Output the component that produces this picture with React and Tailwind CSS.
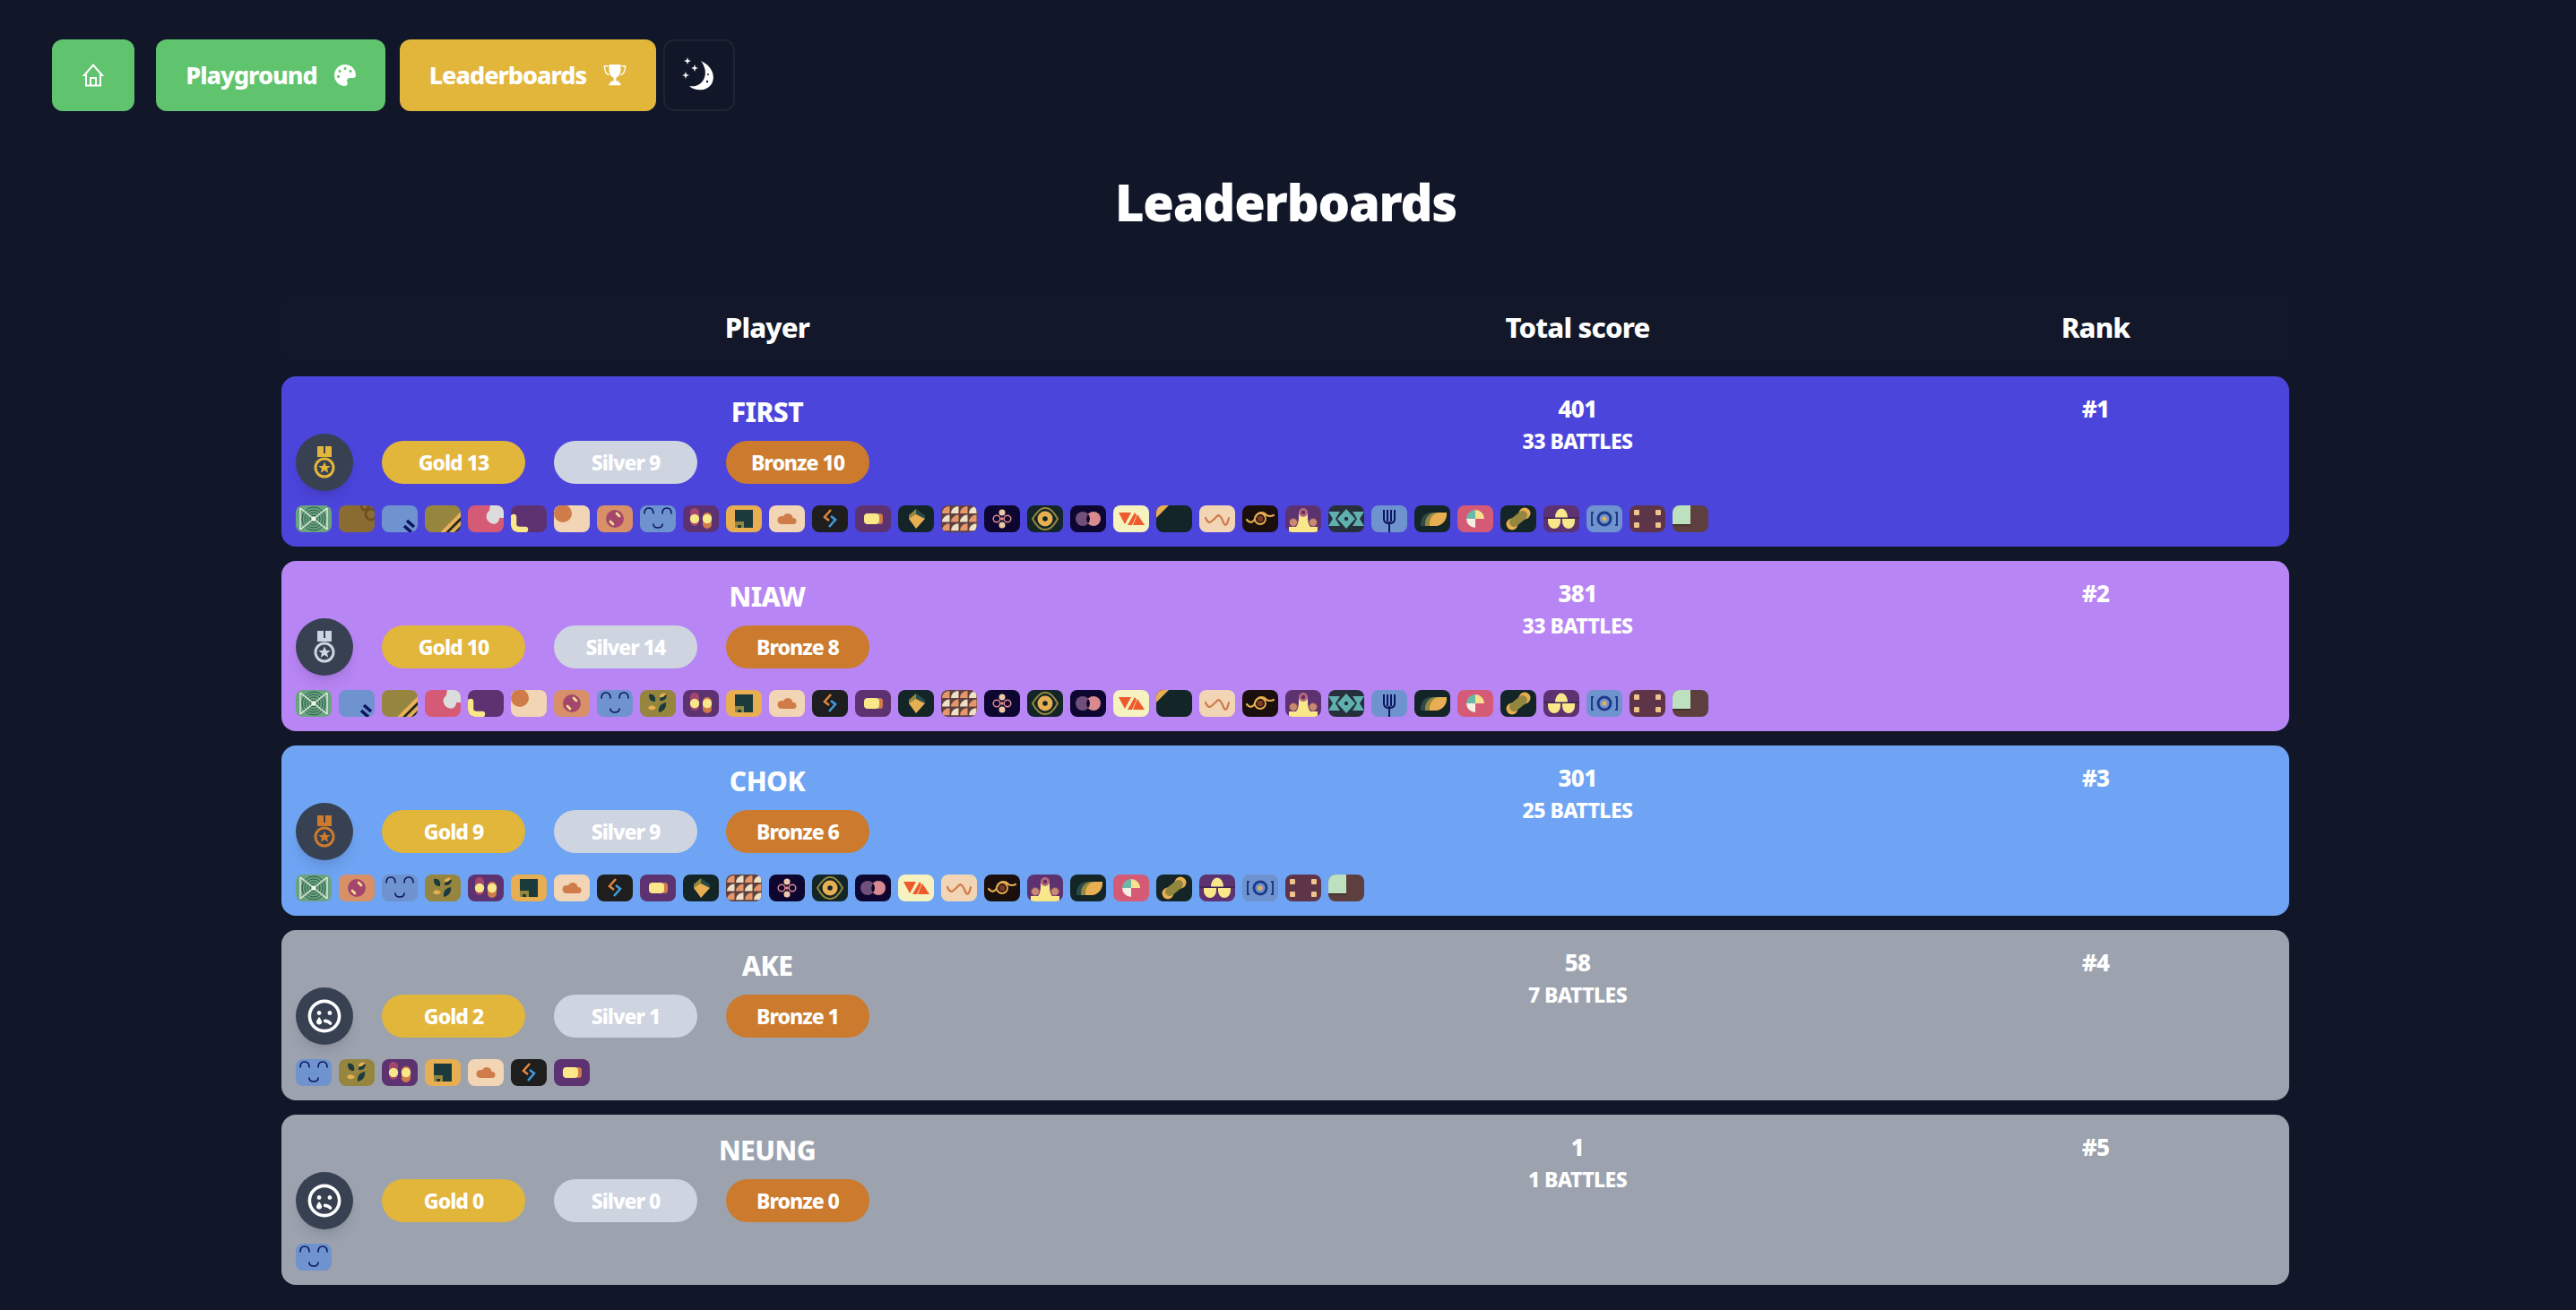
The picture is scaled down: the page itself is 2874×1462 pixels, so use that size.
import React from "react";
import { FaPalette, FaRegSadTear } from "react-icons/fa";

const C = { blue: "#6f93cf", purple: "#5d3270", cream: "#f2d5b5", orange: "#cf7b4a", dark: "#132527", yellow: "#f8e88a", gold: "#e8ae52", navy: "#0d0630", olive: "#96853f", pink: "#d55a75", brown: "#5e3f3f" };

const LEAF = "M17 23C16 13 23 8 28 8H36C37 16 31 23 24 23Z";

const icons = {
  web: [ "#6aa37f", <g key="a"><g fill="none" stroke="#2a5a4c" strokeWidth="1"><circle cx="20" cy="15" r="4" /><circle cx="20" cy="15" r="7" /><circle cx="20" cy="15" r="10" /><circle cx="20" cy="15" r="13" /></g><path d="M5 3L35 27M35 3L5 27M5 3V27M35 3V27" stroke="#e6efe0" strokeWidth="1.4" fill="none" /><circle cx="20" cy="15" r="2.5" fill="#f3f6e6" /></g> ],
  brown: [ "#8a6c33", <g key="a" fill="none" stroke="#6f5020" strokeWidth="3"><circle cx="29" cy="1" r="4" /><circle cx="36" cy="10" r="6" /></g> ],
  diag: [ C.blue, <path key="a" d="M28 17L36 24M25 23L33 30" stroke="#0d1560" strokeWidth="3.6" /> ],
  stripes: [ C.olive, <g key="a"><path d="M18 32L42 8" stroke="#eab05a" strokeWidth="4" /><path d="M23 32L42 13" stroke="#1a1a1a" strokeWidth="2" /><path d="M28 32L42 18" stroke="#eab05a" strokeWidth="3" /><path d="M33 32L42 23" stroke="#1a1a1a" strokeWidth="2.5" /></g> ],
  blob: [ C.pink, <path key="a" d="M25 0H40V14H35C35 20 30 22 26 20C21 18 19 12 22 8C25 6 24 3 25 0Z" fill="#dcdcdc" /> ],
  lshape: [ C.purple, <path key="a" d="M3 13V21Q3 27 10 27H16" stroke={C.yellow} strokeWidth="6.5" strokeLinecap="round" fill="none" /> ],
  dot: [ C.cream, <circle key="a" cx="10" cy="9" r="10" fill={C.orange} /> ],
  salmon: [ "#d89068", <g key="a"><circle cx="20" cy="15" r="10" fill="#a5476d" /><path d="M15 18L18 21M22 9L25 12" stroke="#f5e58b" strokeWidth="2.6" strokeLinecap="round" /></g> ],
  smile: [ C.blue, <path key="a" d="M5 9Q5 3 10 3T15 9M25 9Q25 3 30 3T35 9M15 21Q15 25 20 25T25 21" stroke="#0d1560" strokeWidth="1.6" fill="none" strokeLinecap="round" /> ],
  eyes: [ C.purple, <g key="a"><rect x="8" y="3" width="10" height="20" rx="5" fill="#a5476d" /><rect x="22" y="8" width="10" height="18" rx="5" fill={C.orange} /><circle cx="13" cy="15" r="5.2" fill={C.yellow} /><circle cx="27" cy="15" r="5.2" fill={C.yellow} /></g> ],
  square: [ C.gold, <g key="a"><rect x="10" y="5" width="20" height="20" fill="#1b3a3c" /><path d="M10 18H20V25H17V22H13V25H10Z" fill="#93873f" /></g> ],
  cloud: [ C.cream, <g key="a" fill={C.orange}><circle cx="14" cy="16.500" r="4.500" /><circle cx="21" cy="14.500" r="5.500" /><circle cx="27" cy="17.500" r="3.500" /><rect x="14" y="16" width="13" height="5" /></g> ],
  bolt: [ "#1e1e1e", <g key="a" fill="none" strokeWidth="2.6"><path d="M21 5L14 13L19 17" stroke="#e0853e" /><path d="M21 12L26 16L19 24" stroke="#3f9bdc" /></g> ],
  pill: [ C.purple, <g key="a"><rect x="24" y="9" width="7" height="12" rx="3.5" fill={C.orange} /><rect x="10" y="9" width="17" height="12" rx="4" fill={C.yellow} /></g> ],
  gem: [ C.dark, <g key="a"><path d="M20 4L30 11V15L20 15Z" fill="#2a4a4a" /><path d="M20 4L12 11V15H20Z" fill="#93873f" /><path d="M12 15L20 10L30 15L20 26Z" fill={C.gold} /></g> ],
  pattern: [ C.brown, <g key="a">{[0, 1, 2, 3].flatMap((i) => [0, 1, 2].map((j) => {
    const x = 1 + i * 10; const y = 1 + j * 9.6;
    const f = (i + j) % 2 === 0 ? "#e5976a" : "#efe0c5";
    return <path key={i + "" + j} d={`M${x + 8.500} ${y}V${y + 8}H${x}A8.500 8 0 0 1 ${x + 8.500} ${y}Z`} fill={f} />;
  }))}</g> ],
  flower: [ C.navy, <g key="a"><circle cx="20" cy="8" r="3.500" fill="#efc8a8" /><circle cx="20" cy="22" r="3.500" fill="#efc8a8" /><g fill="none" stroke="#e08a8e" strokeWidth="1.500"><circle cx="14" cy="15" r="3.800" /><circle cx="26" cy="15" r="3.800" /></g><circle cx="20" cy="15" r="1.800" fill="#e08a8e" /></g> ],
  eye: [ C.dark, <g key="a"><path d="M6 15Q14 2 20 3Q27 2 34 15Q27 28 20 27Q13 28 6 15Z" fill="none" stroke="#93873f" strokeWidth="2" /><circle cx="20" cy="15" r="8.500" fill={C.gold} /><circle cx="20" cy="15" r="2.800" fill="#132527" /></g> ],
  circles: [ C.navy, <g key="a"><circle cx="14" cy="15" r="8" fill="#70507a" /><circle cx="26" cy="15" r="8" fill="#d88a8e" /><path d="M20 9.700a8 8 0 0 1 0 10.600a8 8 0 0 1 0 -10.600Z" fill="#0d0630" /></g> ],
  triangles: [ "#f5f2c0", <g key="a" fill="#ee5a2c"><path d="M6 8H20L13 21Z" /><path d="M16 22L24 8L26 11L21 22Z" /><path d="M27 10L35 22H22Z" /></g> ],
  corner: [ C.dark, <path key="a" d="M0 0H14L0 14Z" fill={C.gold} /> ],
  wave: [ C.cream, <path key="a" d="M7 14Q10 21 13.500 18T20 12T26.500 18T33 14" stroke={C.orange} strokeWidth="2.200" fill="none" strokeLinecap="round" /> ],
  swirl: [ "#1a0f0d", <g key="a"><path d="M5 16Q9 21 13 17Q16 8 21 8Q25 8 27 11Q31 13 35 11" stroke={C.gold} strokeWidth="2.200" fill="none" strokeLinecap="round" /><circle cx="20" cy="15" r="6" fill="none" stroke={C.gold} strokeWidth="1.800" /><circle cx="20" cy="15" r="3.500" fill="#7a3a28" /></g> ],
  crown: [ C.purple, <g key="a"><path d="M4 30V24H12C15 20 15 16 15 10A5 5 0 0 1 25 10C25 16 25 20 28 24H36V30Z" fill={C.yellow} /><circle cx="20" cy="8" r="5" fill="#b06a80" /><circle cx="20" cy="8" r="2.200" fill="#6a2d5e" /><circle cx="9" cy="19" r="4.500" fill="#c98a72" stroke="#8c4a68" /><circle cx="31" cy="19" r="4.500" fill="#c98a72" stroke="#8c4a68" /></g> ],
  diamond: [ "#26303a", <g key="a"><path d="M0 7H13L8 15L13 23H0L5 15ZM40 7H27L32 15L27 23H40L35 15Z" fill="#5fb0ae" /><path d="M20 4L30 15L20 26L10 15Z" fill="#5fb0ae" /><circle cx="20" cy="15" r="2.200" fill="#26303a" /></g> ],
  fork: [ C.blue, <g key="a" stroke="#0d1560" fill="none"><path d="M14 5V15Q14 20 20 20Q26 20 26 15V5M18 5V18M22 5V18" strokeWidth="2" /><path d="M20 18V30" strokeWidth="2" /></g> ],
  leaf: [ C.dark, <g key="a"><path d={LEAF} transform="translate(-10 0)" fill="#2d4a48" /><path d={LEAF} transform="translate(-5 0)" fill="#93873f" /><path d={LEAF} fill={C.gold} /></g> ],
  pie: [ C.pink, <g key="a"><path d="M20 15V5A10 10 0 0 0 10 15Z" fill="#6cb8a8" /><path d="M20 15V5A10 10 0 0 1 30 15Z" fill="#f8e08f" /><path d="M20 15V25A10 10 0 0 1 10 15Z" fill="#f5f0e0" /></g> ],
  peanut: [ C.dark, <g key="a"><circle cx="27" cy="9" r="6.500" fill={C.gold} /><circle cx="13" cy="21" r="6.500" fill={C.gold} /><path d="M15 19L25 11" stroke="#93873f" strokeWidth="10" strokeLinecap="round" /></g> ],
  hills: [ C.purple, <g key="a"><path d="M0 14H40" stroke="#2a1a40" strokeWidth="1" /><path d="M13 13.500A7 10 0 0 1 27 13.500Z" fill={C.yellow} /><path d="M5 15H19V18A7 8 0 0 1 5 18ZM21 15H35V18A7 8 0 0 1 21 18Z" fill={C.yellow} /></g> ],
  camera: [ C.blue, <g key="a"><path d="M8 8H6V22H8M32 8H34V22H32" fill="none" stroke="#1f3a86" strokeWidth="2" /><circle cx="20" cy="15" r="7" fill="none" stroke="#1f3a86" strokeWidth="3" /><circle cx="20" cy="15" r="2.600" fill={C.gold} /></g> ],
  dots: [ "#5e3548", <g key="a" fill="#efc38a"><rect x="5" y="5" width="6" height="6" rx="1" /><rect x="29" y="5" width="6" height="6" rx="1" /><rect x="5" y="19" width="6" height="6" rx="1" /><rect x="29" y="19" width="6" height="6" rx="1" /></g> ],
  green: [ C.brown, <g key="a"><rect x="0" y="0" width="20" height="21" fill="#bde0bf" /><rect x="0" y="21" width="20" height="1.500" fill="#3a2a24" /></g> ],
  sprout: [ C.olive, <g key="a"><path d="M10 5C15 4 18 7 17 13C12 13 10 11 10 5ZM30 6C25 5 22 8 22 12C27 12 29 11 30 6Z" fill="#1b3a3c" /><path d="M22 6C25 3 28 3 29 4C27 8 25 9 22 8ZM9 20C12 16 15 17 18 20C15 23 11 23 9 20Z" fill={C.gold} /><path d="M21 25C20 18 24 15 29 14C30 20 26 24 21 25Z" fill="#1b3a3c" /></g> ],
};

function Tile({ name }) {
  const [bg, art] = icons[name];
  return (
    <div className="h-[30px] w-10 shrink-0 overflow-hidden rounded-lg">
      <svg width="40" height="30" viewBox="0 0 40 30" className="block">
        <rect width="40" height="30" fill={bg} />
        {art}
      </svg>
    </div>
  );
}

function Medal({ color }) {
  return (
    <svg width="32" height="36" viewBox="0 0 32 36">
      <path d="M8 0H15V10H8ZM17 0H24V10H17Z" fill={color} />
      <rect x="8" y="8" width="16" height="4" fill={color} />
      <circle cx="16" cy="24" r="10" fill="none" stroke={color} strokeWidth="3" />
      <path d="M16 17.500L18 22H22.800L19 25L20.300 29.800L16 27L11.700 29.800L13 25L9.200 22H14Z" fill={color} />
    </svg>
  );
}

function Sad() {
  return <FaRegSadTear className="text-white" size={38} />;
}

function Home() {
  return (
    <svg width="24" height="26" viewBox="0 0 24 26" fill="none" stroke="white" strokeWidth="2">
      <path d="M2 13L12 1.500L22 13H20V24.500H4V13Z" />
      <path d="M9 24V16H15V24" />
    </svg>
  );
}

function Trophy() {
  return (
    <svg width="26" height="28" viewBox="0 0 28 28" fill="white">
      <path d="M7 1H21V8C21 13 18 16 15.500 17V21H19V23.500H21V26H7V23.500H9V21H12.500V17C10 16 7 13 7 8Z" />
      <path d="M6 3H1.500C1.500 9 3 12 7 14M22 3H26.500C26.500 9 25 12 21 14" fill="none" stroke="white" strokeWidth="1.500" />
    </svg>
  );
}

function Moon() {
  return (
    <svg width="40" height="40" viewBox="0 0 40 40" fill="white">
      <path d="M22 4C40 12 40 32 25 36C19 37 13 36 9 32C24 35 33 18 22 4Z" />
      <circle cx="30" cy="19" r="1" fill="#111729" />
      <circle cx="29" cy="27" r="1.200" fill="#111729" />
      <path d="M7 0L8 3L11 4L8 5L7 8L6 5L3 4L6 3ZM15 8L16 11L19 12L16 13L15 16L14 13L11 12L14 11ZM5 16L6 19L9 20L6 21L5 24L4 21L1 20L4 19Z" />
    </svg>
  );
}

const firstAll = ["web","brown","diag","stripes","blob","lshape","dot","salmon","smile","eyes","square","cloud","bolt","pill","gem","pattern","flower","eye","circles","triangles","corner","wave","swirl","crown","diamond","fork","leaf","pie","peanut","hills","camera","dots","green"];
const second = ["web","diag","stripes","blob","lshape","dot","salmon","smile","sprout","eyes","square","cloud","bolt","pill","gem","pattern","flower","eye","circles","triangles","corner","wave","swirl","crown","diamond","fork","leaf","pie","peanut","hills","camera","dots","green"];
const third = ["web","salmon","smile","sprout","eyes","square","cloud","bolt","pill","gem","pattern","flower","eye","circles","triangles","wave","swirl","crown","leaf","pie","peanut","hills","camera","dots","green"];

const rows = [
  { name: "FIRST", bg: "bg-[#4c45dc]", g: 13, s: 9, b: 10, score: 401, battles: 33, rank: 1, medal: "#e2b53b", tiles: firstAll },
  { name: "NIAW", bg: "bg-[#b885f4]", g: 10, s: 14, b: 8, score: 381, battles: 33, rank: 2, medal: "#cbd5e1", tiles: second },
  { name: "CHOK", bg: "bg-[#6ea4f3]", g: 9, s: 9, b: 6, score: 301, battles: 25, rank: 3, medal: "#cb7a2e", tiles: third },
  { name: "AKE", bg: "bg-[#9ca3af]", g: 2, s: 1, b: 1, score: 58, battles: 7, rank: 4, tiles: ["smile","sprout","eyes","square","cloud","bolt","pill"] },
  { name: "NEUNG", bg: "bg-[#9ca3af]", g: 0, s: 0, b: 0, score: 1, battles: 1, rank: 5, tiles: ["smile"] },
];

function Pill({ bg, children }) {
  return <div className={`flex h-12 w-40 items-center justify-center rounded-full text-[23px] font-extrabold tracking-[-1px] ${bg}`}>{children}</div>;
}

function Row({ r }) {
  return (
    <div className={`grid grid-cols-[1084px_724px_432px] rounded-2xl py-4 text-white ${r.bg}`}>
      <div className="pl-4">
        <div className="-ml-4 h-12 text-center text-[30px] font-extrabold leading-[48px] tracking-[-0.5px]">{r.name}</div>
        <div className="flex items-center gap-8">
          <div className="flex h-16 w-16 items-center justify-center rounded-full bg-[#374151] shadow-lg">
            {r.medal ? <Medal color={r.medal} /> : <Sad />}
          </div>
          <Pill bg="bg-[#e2b53b]">Gold {r.g}</Pill>
          <Pill bg="bg-[#ced5e1]">Silver {r.s}</Pill>
          <Pill bg="bg-[#cb7a2e]">Bronze {r.b}</Pill>
        </div>
      </div>
      <div className="text-center">
        <div className="h-10 text-[26px] font-extrabold leading-10 tracking-[-0.7px]">{r.score}</div>
        <div className="text-[23px] font-extrabold leading-8 tracking-[-0.6px]">{r.battles} BATTLES</div>
      </div>
      <div className="h-10 text-center text-[26px] font-extrabold leading-10 tracking-[-0.7px]">#{r.rank}</div>
      <div className="col-span-3 mt-4 flex gap-2 pl-4">
        {r.tiles.map((t, i) => <Tile key={i} name={t} />)}
      </div>
    </div>
  );
}

export default function App() {
  return (
    <div className="min-h-[1462px] bg-[#111729] font-['Noto_Sans','Liberation_Sans',sans-serif] text-white">
      <nav className="flex items-center pl-[58px] pt-11">
        <div className="flex h-20 w-[92px] items-center justify-center rounded-xl bg-[#5fc46d]"><Home /></div>
        <div className="ml-6 flex h-20 w-64 items-center justify-center gap-[19px] rounded-xl bg-[#5fc46d] text-[27px] font-extrabold tracking-[-1px]">
          Playground <FaPalette size={24} />
        </div>
        <div className="ml-4 flex h-20 w-[286px] items-center justify-center gap-[19px] rounded-xl bg-[#e2b53b] text-[27px] font-extrabold tracking-[-1px]">
          Leaderboards <Trophy />
        </div>
        <div className="ml-2 flex h-20 w-20 items-center justify-center rounded-xl border-2 border-[#1f2433]"><Moon /></div>
      </nav>
      <h1 className="mt-11 pr-[5px] text-center text-[56px] font-black leading-[114px] tracking-[-1.2px]">Leaderboards</h1>
      <div className="ml-[314px] mt-[43px] w-[2240px]">
        <div className="grid h-20 grid-cols-[1084px_724px_432px] items-center rounded-2xl bg-[#121829] text-center text-[31px] font-extrabold tracking-[-0.8px]">
          <div>Player</div>
          <div>Total score</div>
          <div>Rank</div>
        </div>
        <div className="mt-[15px] flex flex-col gap-4">
          {rows.map((r) => <Row key={r.name} r={r} />)}
        </div>
      </div>
    </div>
  );
}
